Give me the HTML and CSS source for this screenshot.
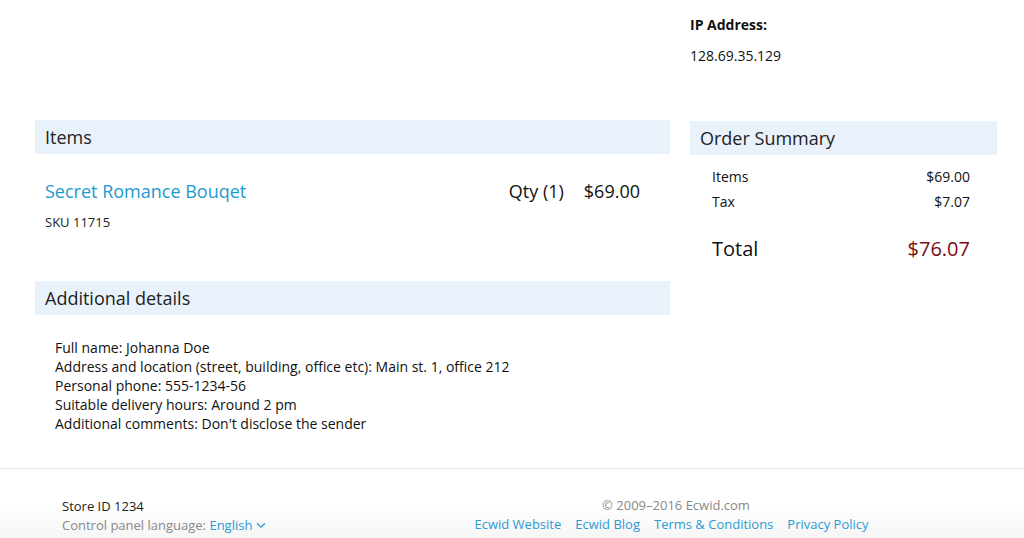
FILE: index.html
```html
<!DOCTYPE html>
<html>
<head>
<meta charset="utf-8">
<link rel="stylesheet" href="styles.css">
</head>
<body>
<div class="page">
  <div class="top">
    <div class="ip">
      <div class="ip-label">IP Address:</div>
      <div class="ip-value">128.69.35.129</div>
    </div>
  </div>
  <div class="main">
    <div class="left">
      <div class="section-head">Items</div>
      <div class="item">
        <div class="item-info">
          <a class="item-name">Secret Romance Bouqet</a>
          <div class="sku">SKU 11715</div>
        </div>
        <div class="qty">Qty (1)</div>
        <div class="price">$69.00</div>
      </div>
      <div class="section-head">Additional details</div>
      <div class="details">
        <div>Full name: Johanna Doe</div>
        <div>Address and location (street, building, office etc): Main st. 1, office 212</div>
        <div>Personal phone: 555-1234-56</div>
        <div>Suitable delivery hours: Around 2 pm</div>
        <div>Additional comments: Don't disclose the sender</div>
      </div>
    </div>
    <div class="right">
      <div class="section-head">Order Summary</div>
      <div class="summary">
        <div class="row"><span>Items</span><span>$69.00</span></div>
        <div class="row"><span>Tax</span><span>$7.07</span></div>
        <div class="row total"><span>Total</span><span class="total-val">$76.07</span></div>
      </div>
    </div>
  </div>
  <footer class="footer">
    <div class="foot-left">
      <div class="store">Store ID 1234</div>
      <div class="lang">Control panel language: <a class="link">English <svg width="10" height="7" viewBox="0 0 10 7"><path d="M1 1.2 L5 5.2 L9 1.2" fill="none" stroke="#2b9ad3" stroke-width="1.3"/></svg></a></div>
    </div>
    <div class="foot-center">
      <div class="copy">© 2009–2016 Ecwid.com</div>
      <div class="links">
        <a class="link">Ecwid Website</a>
        <a class="link">Ecwid Blog</a>
        <a class="link">Terms &amp; Conditions</a>
        <a class="link">Privacy Policy</a>
      </div>
    </div>
  </footer>
</div>
</body>
</html>
```
FILE: styles.css
```css
html, body {
  margin: 0;
  padding: 0;
  background: #fff;
}
body {
  font-family: "Open Sans", "DejaVu Sans", sans-serif;
  color: #111;
  width: 1024px;
  height: 538px;
  overflow: hidden;
}
.page {
  display: flex;
  flex-direction: column;
}
.top {
  display: flex;
  justify-content: flex-end;
  padding: 15px 27px 0 35px;
  height: 105px;
  box-sizing: border-box;
}
.ip {
  width: 307px;
}
.ip-label {
  font-weight: 700;
  font-size: 14px;
  line-height: 20px;
}
.ip-value {
  font-size: 14px;
  line-height: 20px;
  margin-top: 11px;
}
.main {
  display: flex;
  gap: 20px;
  padding: 15px 27px 0 35px;
  height: 363px;
  box-sizing: border-box;
}
.left {
  width: 635px;
}
.right {
  width: 307px;
  margin-top: 1px;
}
.section-head {
  background: #e9f2fb;
  height: 34px;
  line-height: 34px;
  font-size: 18px;
  color: #222;
  padding-left: 10px;
}
.item {
  display: flex;
  align-items: flex-start;
  padding: 25px 30px 0 10px;
  height: 127px;
  box-sizing: border-box;
}
.item-info {
  flex: 1;
}
.item-name {
  display: block;
  color: #1d9ad0;
  font-size: 18px;
  line-height: 24px;
}
.sku {
  font-size: 13px;
  line-height: 18px;
  margin-top: 10px;
  color: #222;
}
.qty {
  font-size: 18px;
  line-height: 24px;
  margin-right: 20px;
}
.price {
  font-size: 18px;
  line-height: 24px;
}
.details {
  padding: 23px 20px 0 20px;
  font-size: 14px;
  line-height: 19px;
}
.summary {
  padding: 9px 27px 0 22px;
}
.row {
  display: flex;
  justify-content: space-between;
  font-size: 14px;
  line-height: 25px;
}
.row.total {
  font-size: 20px;
  line-height: 28px;
  margin-top: 21px;
}
.total-val {
  color: #7b0d10;
}
.footer {
  border-top: 1px solid #e3e3e3;
  height: 41px;
  display: flex;
  padding: 28px 0 0 62px;
  background: linear-gradient(#fff 55%, #f5f5f5);
  font-size: 13px;
  line-height: 19px;
  box-sizing: content-box;
}
.foot-left {
  width: 276px;
}
.store {
  color: #222;
}
.lang {
  color: #888;
}
.link {
  color: #2b9ad3;
  text-decoration: none;
}
.lang svg {
  vertical-align: 1px;
}
.foot-center {
  width: 676px;
  text-align: center;
}
.copy {
  color: #888;
  margin-top: -1px;
}
.links {
  display: flex;
  justify-content: center;
  gap: 14px;
  padding-right: 9px;
}
```
